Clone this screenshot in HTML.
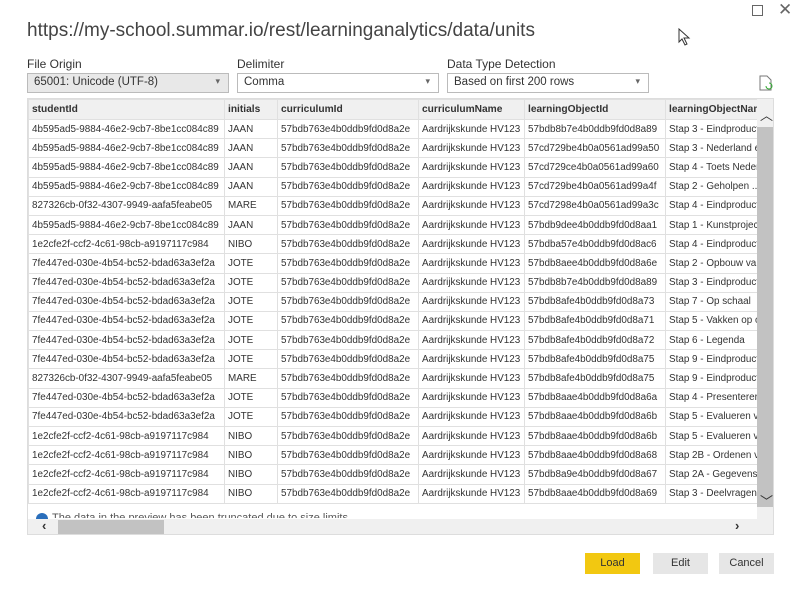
<!DOCTYPE html>
<html><head><meta charset="utf-8"><style>
*{box-sizing:border-box;margin:0;padding:0}
body{width:799px;height:589px;background:#fff;font-family:"Liberation Sans",sans-serif;color:#333;position:relative;overflow:hidden}
.a{position:absolute}
.lbl{font-size:12px;color:#333}
.sel{height:20px;border:1px solid #bbb;font-size:11.5px;padding:2px 6px;background:#fff}
.sel:after{content:"▾";position:absolute;right:8px;top:2px;font-size:9px;color:#666}
#grid{left:27px;top:98px;width:747px;height:437px;border:1px solid #ddd;background:#fff;overflow:hidden}
table{border-collapse:collapse;table-layout:fixed;width:737px;font-size:9.9px;position:absolute;left:0;top:0}
td,th{border:1px solid #e0e0e0;height:19.2px;padding:0 3px;white-space:nowrap;overflow:hidden;text-align:left;color:#333}
th{background:#f0f0f0;font-weight:bold;height:20px;font-size:10.2px}
.btn{height:21px;font-size:11px;text-align:center;line-height:21px;background:#e6e6e6;color:#333}
</style></head><body>
<div class="a" style="left:27px;top:20px;font-size:19px;color:#444">https://my-school.summar.io/rest/learninganalytics/data/units</div>
<div class="a" style="left:752px;top:5px;width:11px;height:11px;border:1px solid #666"></div>
<div class="a" style="left:778px;top:0px;font-size:17px;color:#666">✕</div>
<svg class="a" style="left:678px;top:28px" width="14" height="18"><path d="M1 1 L1 14 L4 11 L7 17 L9 16 L6 10 L11 10 Z" fill="#fff" stroke="#333"/></svg>
<div class="a lbl" style="left:27px;top:57px">File Origin</div>
<div class="a sel" style="left:27px;top:73px;width:202px;background:#e8e8e8">65001: Unicode (UTF-8)</div>
<div class="a lbl" style="left:237px;top:57px">Delimiter</div>
<div class="a sel" style="left:237px;top:73px;width:202px">Comma</div>
<div class="a lbl" style="left:447px;top:57px">Data Type Detection</div>
<div class="a sel" style="left:447px;top:73px;width:202px">Based on first 200 rows</div>
<svg class="a" style="left:759px;top:75px" width="14" height="16"><path d="M1 1 H8 L12 5 V15 H1 Z" fill="none" stroke="#777"/><path d="M7 11 a3 3 0 1 0 3-3" fill="none" stroke="#3a3"/></svg>
<div class="a" id="grid">
<table>
<colgroup><col style="width:196px"><col style="width:53px"><col style="width:141px"><col style="width:106px"><col style="width:141px"><col style="width:100px"></colgroup>
<tr><th>studentId</th><th>initials</th><th>curriculumId</th><th>curriculumName</th><th>learningObjectId</th><th>learningObjectNam</th></tr>
<tr><td>4b595ad5-9884-46e2-9cb7-8be1cc084c89</td><td>JAAN</td><td>57bdb763e4b0ddb9fd0d8a2e</td><td>Aardrijkskunde HV123</td><td>57bdb8b7e4b0ddb9fd0d8a89</td><td>Stap 3 - Eindproduct</td></tr>
<tr><td>4b595ad5-9884-46e2-9cb7-8be1cc084c89</td><td>JAAN</td><td>57bdb763e4b0ddb9fd0d8a2e</td><td>Aardrijkskunde HV123</td><td>57cd729be4b0a0561ad99a50</td><td>Stap 3 - Nederland e</td></tr>
<tr><td>4b595ad5-9884-46e2-9cb7-8be1cc084c89</td><td>JAAN</td><td>57bdb763e4b0ddb9fd0d8a2e</td><td>Aardrijkskunde HV123</td><td>57cd729ce4b0a0561ad99a60</td><td>Stap 4 - Toets Neder</td></tr>
<tr><td>4b595ad5-9884-46e2-9cb7-8be1cc084c89</td><td>JAAN</td><td>57bdb763e4b0ddb9fd0d8a2e</td><td>Aardrijkskunde HV123</td><td>57cd729be4b0a0561ad99a4f</td><td>Stap 2 - Geholpen ...</td></tr>
<tr><td>827326cb-0f32-4307-9949-aafa5feabe05</td><td>MARE</td><td>57bdb763e4b0ddb9fd0d8a2e</td><td>Aardrijkskunde HV123</td><td>57cd7298e4b0a0561ad99a3c</td><td>Stap 4 - Eindproduct</td></tr>
<tr><td>4b595ad5-9884-46e2-9cb7-8be1cc084c89</td><td>JAAN</td><td>57bdb763e4b0ddb9fd0d8a2e</td><td>Aardrijkskunde HV123</td><td>57bdb9dee4b0ddb9fd0d8aa1</td><td>Stap 1 - Kunstproject</td></tr>
<tr><td>1e2cfe2f-ccf2-4c61-98cb-a9197117c984</td><td>NIBO</td><td>57bdb763e4b0ddb9fd0d8a2e</td><td>Aardrijkskunde HV123</td><td>57bdba57e4b0ddb9fd0d8ac6</td><td>Stap 4 - Eindproduct</td></tr>
<tr><td>7fe447ed-030e-4b54-bc52-bdad63a3ef2a</td><td>JOTE</td><td>57bdb763e4b0ddb9fd0d8a2e</td><td>Aardrijkskunde HV123</td><td>57bdb8aee4b0ddb9fd0d8a6e</td><td>Stap 2 - Opbouw va</td></tr>
<tr><td>7fe447ed-030e-4b54-bc52-bdad63a3ef2a</td><td>JOTE</td><td>57bdb763e4b0ddb9fd0d8a2e</td><td>Aardrijkskunde HV123</td><td>57bdb8b7e4b0ddb9fd0d8a89</td><td>Stap 3 - Eindproduct</td></tr>
<tr><td>7fe447ed-030e-4b54-bc52-bdad63a3ef2a</td><td>JOTE</td><td>57bdb763e4b0ddb9fd0d8a2e</td><td>Aardrijkskunde HV123</td><td>57bdb8afe4b0ddb9fd0d8a73</td><td>Stap 7 - Op schaal</td></tr>
<tr><td>7fe447ed-030e-4b54-bc52-bdad63a3ef2a</td><td>JOTE</td><td>57bdb763e4b0ddb9fd0d8a2e</td><td>Aardrijkskunde HV123</td><td>57bdb8afe4b0ddb9fd0d8a71</td><td>Stap 5 - Vakken op o</td></tr>
<tr><td>7fe447ed-030e-4b54-bc52-bdad63a3ef2a</td><td>JOTE</td><td>57bdb763e4b0ddb9fd0d8a2e</td><td>Aardrijkskunde HV123</td><td>57bdb8afe4b0ddb9fd0d8a72</td><td>Stap 6 - Legenda</td></tr>
<tr><td>7fe447ed-030e-4b54-bc52-bdad63a3ef2a</td><td>JOTE</td><td>57bdb763e4b0ddb9fd0d8a2e</td><td>Aardrijkskunde HV123</td><td>57bdb8afe4b0ddb9fd0d8a75</td><td>Stap 9 - Eindproduct</td></tr>
<tr><td>827326cb-0f32-4307-9949-aafa5feabe05</td><td>MARE</td><td>57bdb763e4b0ddb9fd0d8a2e</td><td>Aardrijkskunde HV123</td><td>57bdb8afe4b0ddb9fd0d8a75</td><td>Stap 9 - Eindproduct</td></tr>
<tr><td>7fe447ed-030e-4b54-bc52-bdad63a3ef2a</td><td>JOTE</td><td>57bdb763e4b0ddb9fd0d8a2e</td><td>Aardrijkskunde HV123</td><td>57bdb8aae4b0ddb9fd0d8a6a</td><td>Stap 4 - Presenterer</td></tr>
<tr><td>7fe447ed-030e-4b54-bc52-bdad63a3ef2a</td><td>JOTE</td><td>57bdb763e4b0ddb9fd0d8a2e</td><td>Aardrijkskunde HV123</td><td>57bdb8aae4b0ddb9fd0d8a6b</td><td>Stap 5 - Evalueren v</td></tr>
<tr><td>1e2cfe2f-ccf2-4c61-98cb-a9197117c984</td><td>NIBO</td><td>57bdb763e4b0ddb9fd0d8a2e</td><td>Aardrijkskunde HV123</td><td>57bdb8aae4b0ddb9fd0d8a6b</td><td>Stap 5 - Evalueren v</td></tr>
<tr><td>1e2cfe2f-ccf2-4c61-98cb-a9197117c984</td><td>NIBO</td><td>57bdb763e4b0ddb9fd0d8a2e</td><td>Aardrijkskunde HV123</td><td>57bdb8aae4b0ddb9fd0d8a68</td><td>Stap 2B - Ordenen v</td></tr>
<tr><td>1e2cfe2f-ccf2-4c61-98cb-a9197117c984</td><td>NIBO</td><td>57bdb763e4b0ddb9fd0d8a2e</td><td>Aardrijkskunde HV123</td><td>57bdb8a9e4b0ddb9fd0d8a67</td><td>Stap 2A - Gegevens</td></tr>
<tr><td>1e2cfe2f-ccf2-4c61-98cb-a9197117c984</td><td>NIBO</td><td>57bdb763e4b0ddb9fd0d8a2e</td><td>Aardrijkskunde HV123</td><td>57bdb8aae4b0ddb9fd0d8a69</td><td>Stap 3 - Deelvragen</td></tr>
</table>
<div class="a" style="left:8px;top:414px;width:12px;height:12px;border-radius:50%;background:#2a6ebb"></div>
<div class="a" style="left:24px;top:413px;font-size:11px;color:#555;height:6px;overflow:hidden">The data in the preview has been truncated due to size limits</div>
<div class="a" style="left:729px;top:0;width:17px;height:436px;background:#f0f0f0"></div>
<div class="a" style="left:729px;top:28px;width:17px;height:380px;background:#c2c2c2"></div>
<div class="a" style="left:732px;top:12px;font-size:13px;color:#333;line-height:10px">︿</div>
<div class="a" style="left:732px;top:392px;font-size:13px;color:#333">﹀</div>
<div class="a" style="left:0;top:420px;width:729px;height:16px;background:#f0f0f0"></div>
<div class="a" style="left:30px;top:421px;width:106px;height:14px;background:#c2c2c2"></div>
<div class="a" style="left:14px;top:419px;font-size:13px;font-weight:bold;color:#333">‹</div>
<div class="a" style="left:707px;top:419px;font-size:13px;font-weight:bold;color:#333">›</div>
</div>
<div class="a btn" style="left:585px;top:553px;width:55px;background:#f2c811">Load</div>
<div class="a btn" style="left:653px;top:553px;width:55px">Edit</div>
<div class="a btn" style="left:719px;top:553px;width:55px">Cancel</div>
</body></html>
